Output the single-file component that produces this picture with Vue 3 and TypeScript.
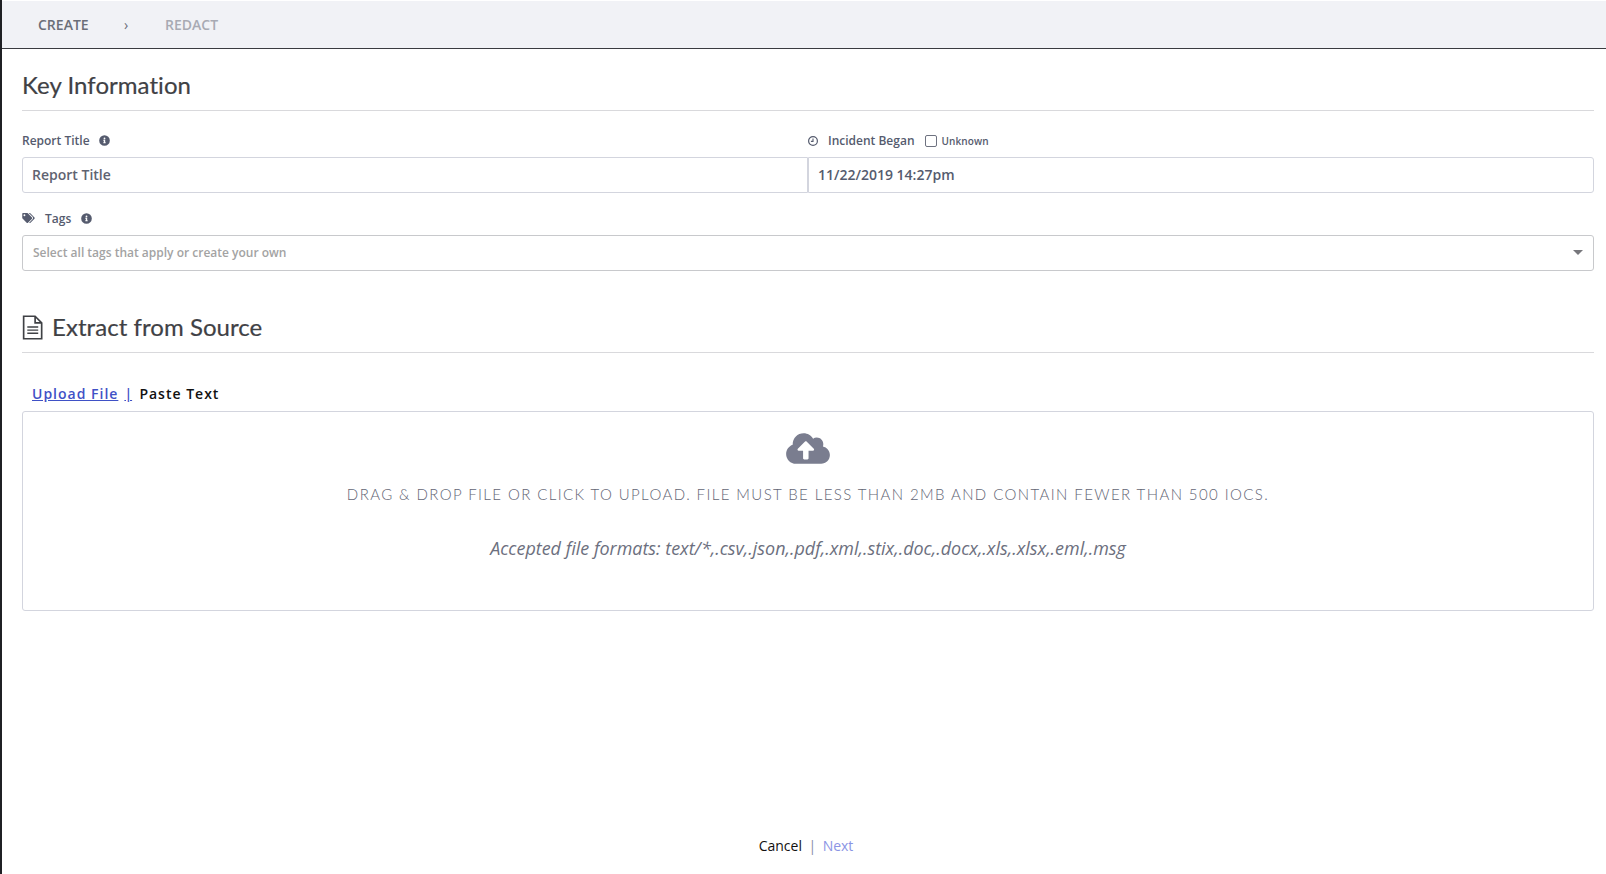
<script setup lang="ts">
const formats = 'Accepted file formats: text/*,.csv,.json,.pdf,.xml,.stix,.doc,.docx,.xls,.xlsx,.eml,.msg'
</script>

<template>
  <div class="page">
    <nav class="crumbs">
      <span class="crumb-active">CREATE</span>
      <span class="crumb-sep">›</span>
      <span class="crumb-next">REDACT</span>
    </nav>
    <main class="content">
      <h2 class="heading">Key Information</h2>
      <div class="row-labels">
        <div class="label title-label">
          <span>Report Title</span>
          <svg class="info" viewBox="0 0 512 512"><path fill="#555b6e" d="M256 8a248 248 0 1 0 0 496 248 248 0 0 0 0-496zm0 110a42 42 0 1 1 0 84 42 42 0 0 1 0-84zm56 254c0 7-5 12-12 12h-88c-7 0-12-5-12-12v-24c0-7 5-12 12-12h12v-64h-12c-7 0-12-5-12-12v-24c0-7 5-12 12-12h64c7 0 12 5 12 12v100h12c7 0 12 5 12 12z"/></svg>
        </div>
        <div class="label began-label">
          <svg class="clock" viewBox="0 0 12 12"><circle cx="6" cy="6" r="4.400" fill="none" stroke="#555b6e" stroke-width="1.200"/><path d="M6 3.400V6.400H3.900" fill="none" stroke="#555b6e" stroke-width="1.100"/></svg>
          <span>Incident Began</span>
          <span class="check"></span>
          <span class="unknown">Unknown</span>
        </div>
      </div>
      <div class="inputs">
        <div class="input">Report Title</div>
        <div class="input input-right">11/22/2019 14:27pm</div>
      </div>
      <div class="label tags-label">
        <svg class="tag" viewBox="0 0 640 512"><path fill="#555b6e" d="M497.900 225.900 286.100 14.100A48 48 0 0 0 252.100 0H48C21.500 0 0 21.500 0 48v204.100a48 48 0 0 0 14.100 33.900l211.800 211.900c18.700 18.700 49.100 18.700 67.900 0l204.100-204.100c18.700-18.800 18.700-49.200 0-67.900zM112 160a48 48 0 1 1 0-96 48 48 0 0 1 0 96zm513.900 133.800L421.800 497.900c-18.700 18.700-49.100 18.700-67.900 0l-.4-.4L527.600 323.500c17-17 26.400-39.600 26.400-63.600s-9.400-46.600-26.400-63.600L331.400 0h48.700a48 48 0 0 1 33.900 14.100l211.900 211.800c18.700 18.700 18.700 49.100 0 67.900z"/></svg>
        <span>Tags</span>
        <svg class="info" viewBox="0 0 512 512"><path fill="#555b6e" d="M256 8a248 248 0 1 0 0 496 248 248 0 0 0 0-496zm0 110a42 42 0 1 1 0 84 42 42 0 0 1 0-84zm56 254c0 7-5 12-12 12h-88c-7 0-12-5-12-12v-24c0-7 5-12 12-12h12v-64h-12c-7 0-12-5-12-12v-24c0-7 5-12 12-12h64c7 0 12 5 12 12v100h12c7 0 12 5 12 12z"/></svg>
      </div>
      <div class="select">
        <span>Select all tags that apply or create your own</span>
        <span class="caret"></span>
      </div>
      <h2 class="heading source-heading">
        <svg class="doc" viewBox="0 0 20 24"><path d="M1.500 1.200H12.500L18.800 7.500V22.800H1.500Z M12.500 1.200V7.500H18.800" fill="none" stroke="#3f4145" stroke-width="1.600"/><path d="M5 11.500H15.500M5 14.500H15.500M5 17.500H15.500" stroke="#3f4145" stroke-width="1.400"/></svg>
        <span>Extract from Source</span>
      </h2>
      <div class="tabs">
        <a class="tab-link">Upload File</a>
        <span class="tab-sep">|</span>
        <span class="tab-current">Paste Text</span>
      </div>
      <div class="drop">
        <svg class="cloud" viewBox="0 0 640 512"><path fill="#7a7d8f" d="M537.600 226.600c4.100-10.700 6.400-22.400 6.400-34.600 0-53-43-96-96-96-19.700 0-38.100 6-53.300 16.200C367 64.200 315.300 32 256 32c-88.400 0-160 71.600-160 160 0 2.700.1 5.400.2 8.100C40.200 219.800 0 273.200 0 336c0 79.500 64.500 144 144 144h368c70.700 0 128-57.300 128-128 0-61.900-44-113.600-102.400-125.400zM393.400 288H328v112c0 8.800-7.200 16-16 16h-48c-8.800 0-16-7.200-16-16V288h-65.400c-14.300 0-21.400-17.200-11.300-27.300l105.400-105.400c6.200-6.200 16.400-6.200 22.600 0l105.400 105.400c10.100 10.100 2.900 27.300-11.300 27.300z"/></svg>
        <p class="drop-main">DRAG &amp; DROP FILE OR CLICK TO UPLOAD. FILE MUST BE LESS THAN 2MB AND CONTAIN FEWER THAN 500 IOCS.</p>
        <p class="drop-formats">{{ formats }}</p>
      </div>
      <div class="spacer"></div>
      <footer class="actions">
        <span class="cancel">Cancel</span>
        <span class="action-sep">|</span>
        <span class="next">Next</span>
      </footer>
    </main>
  </div>
</template>

<style>
html, body { margin: 0; background: #fff; }
</style>

<style scoped>
.page {
  box-sizing: border-box;
  width: 1606px;
  height: 874px;
  border-left: 2px solid #1f2024;
  display: flex;
  flex-direction: column;
  font-family: "Open Sans", "Noto Sans", sans-serif;
  overflow: hidden;
}
.crumbs {
  box-sizing: border-box;
  height: 48px;
  flex: none;
  margin-top: 1px;
  background: #f1f2f6;
  border-bottom: 1px solid #3a3b40;
  display: flex;
  align-items: center;
  font-size: 14px;
  font-weight: 600;
  padding-left: 36px;
}
.crumb-active { color: #6b6e78; width: 50px; }
.crumb-sep { color: #6b6e78; margin-left: 36px; width: 7px; font-weight: 400; }
.crumb-next { color: #a8aab3; margin-left: 34px; }
.content {
  flex: 1;
  display: flex;
  flex-direction: column;
  padding: 0 12px 0 20px;
  min-height: 0;
}
.heading {
  margin: 0;
  font-family: Lato, sans-serif;
  font-weight: 400;
  font-size: 24px;
  letter-spacing: 0.05px;
  color: #3f4145;
  line-height: 32px;
  padding: 20px 0 9px;
  border-bottom: 1px solid #d9d9dc;
  -webkit-text-stroke: 0.2px #3f4145;
}
.source-heading {
  display: flex;
  align-items: center;
  margin-top: 24px;
  gap: 9px;
  padding: 16px 0 9px;
}
.doc { width: 21px; height: 25px; flex: none; }
.row-labels {
  display: grid;
  grid-template-columns: 786px 1fr;
  margin-top: 20px;
}
.label {
  display: flex;
  align-items: center;
  height: 18px;
  font-size: 12px;
  font-weight: 600;
  color: #555b6e;
}
.title-label { gap: 9px; }
.began-label { margin-left: -1px; }
.info { width: 11px; height: 11px; flex: none; }
.clock { width: 12px; height: 12px; margin-right: 9px; position: relative; top: 1px; }
.check {
  box-sizing: border-box;
  width: 12px;
  height: 12px;
  border: 1px solid #6e7280;
  border-radius: 2px;
  margin-left: 10px;
  margin-right: 5px;
  position: relative;
  top: 1px;
}
.unknown { font-size: 10px; letter-spacing: 0.1px; position: relative; top: 1px; }
.inputs {
  display: grid;
  grid-template-columns: 786px 1fr;
  margin-top: 8px;
}
.input {
  box-sizing: border-box;
  height: 36px;
  border: 1px solid #d3d5de;
  border-radius: 3px 0 0 3px;
  display: flex;
  align-items: center;
  padding: 0 0 1px 9px;
  font-size: 14px;
  font-weight: 600;
  color: #5f6371;
}
.input-right {
  border-radius: 0 3px 3px 0;
  color: #555b6e;
}
.tags-label { margin-top: 16px; }
.tag { width: 13px; height: 10px; margin-right: 10px; flex: none; }
.tags-label .info { margin-left: 10px; }
.select {
  box-sizing: border-box;
  height: 36px;
  margin-top: 8px;
  border: 1px solid #c8c9cc;
  border-radius: 3px;
  display: flex;
  align-items: center;
  justify-content: space-between;
  padding: 0 10px 2px;
  font-size: 12px;
  font-weight: 600;
  color: #a3a3a3;
}
.caret {
  width: 0;
  height: 0;
  border-left: 5px solid transparent;
  border-right: 5px solid transparent;
  border-top: 5px solid #77777c;
}
.tabs {
  margin-top: 31px;
  padding-left: 10px;
  height: 20px;
  line-height: 20px;
  font-size: 14px;
  font-weight: 600;
  letter-spacing: 1px;
  display: flex;
}
.tab-link { color: #3f51c6; text-decoration: underline; }
.tab-sep {
  box-sizing: border-box;
  width: 6px;
  margin-left: 6px;
  margin-right: 9px;
  color: #3f51c6;
  text-decoration: underline;
  letter-spacing: 0;
}
.tab-current { color: #111; }
.drop {
  box-sizing: border-box;
  height: 200px;
  margin-top: 7px;
  border: 1px solid #d3d5de;
  border-radius: 3px;
  display: flex;
  flex-direction: column;
  align-items: center;
  padding-top: 19px;
}
.cloud { width: 44px; height: 35px; flex: none; }
.drop-main {
  margin: 17px 0 0;
  font-family: Lato, sans-serif;
  font-weight: 300;
  font-size: 15px;
  line-height: 22px;
  letter-spacing: 1.405px;
  color: #636675;
}
.drop-formats {
  margin: 31px 0 0;
  font-size: 17.940px;
  line-height: 24px;
  font-style: italic;
  color: #6c6f7e;
}
.spacer { flex: 1; }
.actions {
  display: flex;
  justify-content: center;
  align-items: center;
  height: 20px;
  margin-bottom: 19px;
  padding-right: 4px;
  font-size: 14px;
}
.cancel { color: #111; }
.action-sep { color: #8a8fa8; margin: 0 6.500px; }
.next { color: #8b94e4; }
</style>
